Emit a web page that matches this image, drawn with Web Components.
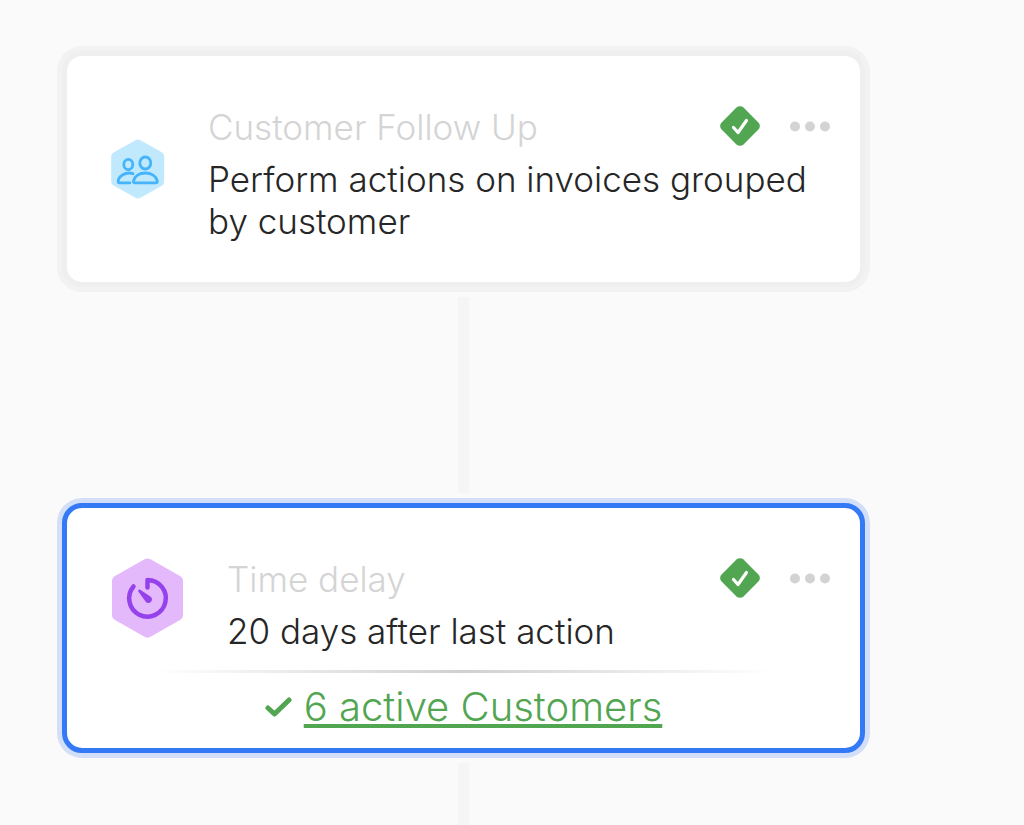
<!DOCTYPE html>
<html lang="en">
<head>
<meta charset="utf-8">
<meta name="viewport" content="width=device-width, initial-scale=1">
<title>Workflow</title>
<style>
  body {
    margin: 0;
    background: #fafafa;
    color: #262626;
    font-family: Inter, "Liberation Sans", sans-serif;
  }
</style>
</head>
<body>
<workflow-canvas>
  <workflow-card>
    <hex-icon slot="icon" icon="customers"></hex-icon>
    <span slot="label">Customer Follow Up</span>
    <span slot="title">Perform actions on invoices grouped by customer</span>
  </workflow-card>
  <workflow-connector></workflow-connector>
  <workflow-card selected>
    <hex-icon slot="icon" icon="timer"></hex-icon>
    <span slot="label">Time delay</span>
    <span slot="title">20 days after last action</span>
    <active-link slot="footer">6 active Customers</active-link>
  </workflow-card>
  <workflow-connector open></workflow-connector>
</workflow-canvas>

<script>
class WorkflowCanvas extends HTMLElement {
  constructor() {
    super();
    this.attachShadow({ mode: 'open' });
    this.shadowRoot.innerHTML = `
      <style>
        :host {
          display: block;
        }
        main {
          display: flex;
          flex-direction: column;
          box-sizing: border-box;
          min-height: 100vh;
          padding: 51px 159px 0 62px;
        }
      </style>
      <main><slot></slot></main>
    `;
  }
}

class WorkflowConnector extends HTMLElement {
  constructor() {
    super();
    this.attachShadow({ mode: 'open' });
    this.shadowRoot.innerHTML = `
      <style>
        :host {
          display: block;
          align-self: center;
          width: 11px;
          height: 196px;
          margin: 10px 0;
          background: #f5f5f5;
        }
        /* runs on to the bottom of the canvas */
        :host([open]) {
          flex: 1;
          height: auto;
          min-height: 60px;
          margin-bottom: 0;
        }
      </style>
    `;
  }
}

class WorkflowCard extends HTMLElement {
  constructor() {
    super();
    this.attachShadow({ mode: 'open' });
    this.shadowRoot.innerHTML = `
      <style>
        :host {
          display: block;
          border: 5px solid #efefef;
          border-radius: 20px;
          box-shadow: 0 0 0 5px #f2f2f2;
          background: white;
        }
        :host([selected]) {
          border-color: #3479f6;
          box-shadow: 0 0 0 5px #d3dff8;
        }
        .body {
          display: flex;
          align-items: flex-start;
          gap: 43px;
          padding: 50px 30px 40px 44px;
        }
        :host([selected]) .body {
          padding-bottom: 18px;
        }
        .text {
          flex: 1;
          min-width: 0;
        }
        .head {
          display: flex;
          align-items: center;
          gap: 30px;
          margin-bottom: 10px;
        }
        .label, .title {
          margin: 0;
          font-size: 35px;
          line-height: 42px;
          font-weight: 300;
        }
        .label {
          flex: 1;
          color: #d4d4d4;
        }
        .status {
          display: block;
          width: 40px;
          height: 42px;
        }
        button {
          display: block;
          padding: 0;
          border: 0;
          background: none;
          cursor: pointer;
        }
        button svg {
          display: block;
          width: 40px;
          height: 12px;
        }
      </style>
      <article>
        <div class="body">
          <slot name="icon"></slot>
          <div class="text">
            <div class="head">
              <p class="label"><slot name="label"></slot></p>
              <svg class="status" viewBox="0 0 40 42" role="img" aria-label="Enabled">
                <rect x="4.500" y="4.500" width="31" height="31" rx="5" transform="rotate(45 20 20)" fill="#52a551"/>
                <path d="M13.500 21.500l4.500 5L26.500 14.500" fill="none" stroke="white" stroke-width="3.200" stroke-linecap="round" stroke-linejoin="round"/>
              </svg>
              <button type="button" aria-label="More">
                <svg viewBox="0 0 40 12" fill="#d3d3d3">
                  <circle cx="5" cy="5.500" r="5"/>
                  <circle cx="20" cy="5.500" r="5"/>
                  <circle cx="35" cy="5.500" r="5"/>
                </svg>
              </button>
            </div>
            <h2 class="title"><slot name="title"></slot></h2>
          </div>
        </div>
        <slot name="footer"></slot>
      </article>
    `;
  }
}

class ActiveLink extends HTMLElement {
  constructor() {
    super();
    this.attachShadow({ mode: 'open' });
    this.shadowRoot.innerHTML = `
      <style>
        :host {
          display: block;
          padding: 0 88px 17px;
        }
        .rule {
          height: 3px;
          background: linear-gradient(to right, transparent, #d0d0d0, transparent);
        }
        .row {
          display: flex;
          align-items: center;
          justify-content: center;
          gap: 12px;
          margin-top: 10px;
          color: #52a551;
        }
        svg {
          width: 27px;
          height: 20px;
        }
        a {
          color: inherit;
          font-size: 40px;
          line-height: 48px;
          font-weight: 300;
          text-decoration-thickness: 4px;
          text-underline-offset: 3px;
          text-decoration-skip-ink: none;
        }
      </style>
      <div class="rule"></div>
      <div class="row">
        <svg viewBox="0 0 27 20" fill="none" stroke="currentColor" stroke-width="5" stroke-linecap="round" stroke-linejoin="round" aria-hidden="true">
          <path d="M3 11l6.500 6L24 3"/>
        </svg>
        <a href="#customers"><slot></slot></a>
      </div>
    `;
  }
}

class HexIcon extends HTMLElement {
  static get observedAttributes() {
    return ['icon'];
  }

  constructor() {
    super();
    this.attachShadow({ mode: 'open' });
  }

  attributeChangedCallback() {
    this.render();
  }

  render() {
    const icons = {
      customers: `
        <svg width="54" height="60" viewBox="0 0 54 60">
          <path d="M24.500 1.200q2.500-1.400 5 0L51.200 13.500q2 1.300 2 4V42.500q0 2.700-2 4L29.500 58.800q-2.500 1.400-5 0L2.500 46.500Q.2 45.200.2 42.500V17.500q0-2.700 2.300-4z" fill="#c0e9fd"/>
          <g fill="none" stroke="#45b4fa" stroke-width="2.800" stroke-linecap="round" stroke-linejoin="round">
            <ellipse cx="17.300" cy="25.500" rx="4.500" ry="5.200"/>
            <ellipse cx="34.300" cy="24" rx="5.500" ry="6"/>
            <path d="M22 34.700C14.500 32.200 7.200 37.500 7.200 42.500q0 1.300 1.300 1.300H19"/>
            <path d="M24 43.800q-1.800 0-1.500-1.900C23.600 37.100 28.300 34 34.300 34s10.800 3.100 12 7.900q.3 1.900-1.500 1.900z"/>
          </g>
        </svg>`,
      timer: `
        <svg width="73" height="80" viewBox="-1 0 73 80">
          <path d="M32.500 1.300q3-1.700 6 0L68 18q3 1.700 3 5.200V56.800q0 3.500-3 5.200L38.500 78.700q-3 1.700-6 0L3 62Q0 60.300 0 56.800V23.200Q0 19.700 3 18z" fill="#e4b9fb"/>
          <path d="M35.500 29.500v-7.500A18.300 18.300 0 1 1 21.500 28.500" fill="none" stroke="#9542ec" stroke-width="4.500" stroke-linecap="round" stroke-linejoin="round"/>
          <path d="M28.300 31.700L38.400 38.400A3.600 3.600 0 1 1 33.300 43.200L26.300 33.600Q25.500 31 28.300 31.700z" fill="#9542ec"/>
        </svg>`,
    };

    this.shadowRoot.innerHTML = `
      <style>
        :host {
          display: block;
          flex: none;
        }
        :host([icon="customers"]) {
          margin-top: 33px;
        }
        svg {
          display: block;
        }
      </style>
      ${icons[this.getAttribute('icon')] || ''}
    `;
  }
}

customElements.define('workflow-canvas', WorkflowCanvas);
customElements.define('workflow-connector', WorkflowConnector);
customElements.define('workflow-card', WorkflowCard);
customElements.define('active-link', ActiveLink);
customElements.define('hex-icon', HexIcon);
</script>
</body>
</html>
